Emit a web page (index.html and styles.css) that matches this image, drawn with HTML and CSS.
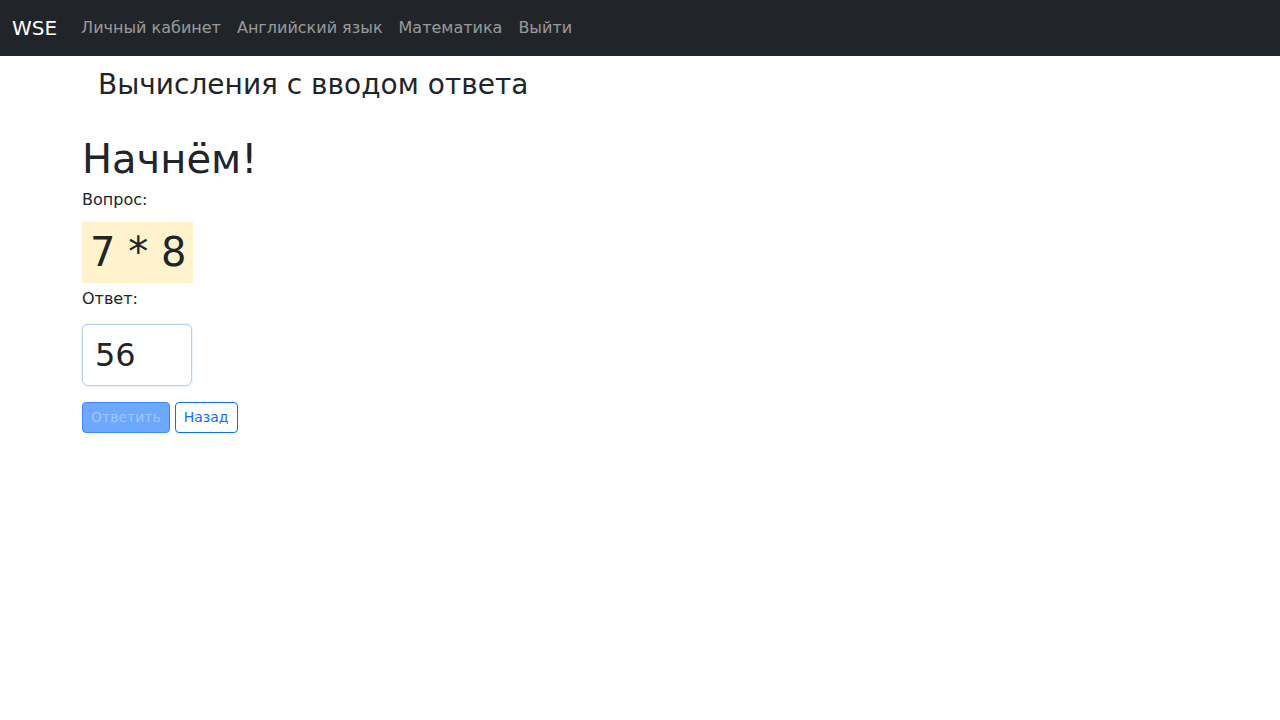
FILE: index.html
```html
<!DOCTYPE html>
<html lang="ru">
<head>
<meta charset="utf-8">
<title>WSE</title>
<link rel="stylesheet" href="styles.css">
</head>
<body>
<nav class="navbar">
  <a class="brand" href="#">WSE</a>
  <ul class="nav">
    <li><a href="#">Личный кабинет</a></li>
    <li><a href="#">Английский язык</a></li>
    <li><a href="#">Математика</a></li>
    <li><a href="#">Выйти</a></li>
  </ul>
</nav>
<main class="container">
  <h3 class="page-title">Вычисления с вводом ответа</h3>
  <h1 class="start">Начнём!</h1>
  <div class="label label-q">Вопрос:</div>
  <div class="question">7 * 8</div>
  <div class="label">Ответ:</div>
  <input class="answer" type="text" value="56">
  <div class="buttons">
    <button class="btn btn-primary" disabled>Ответить</button>
    <button class="btn btn-outline">Назад</button>
  </div>
</main>
</body>
</html>
```
FILE: styles.css
```css
* { box-sizing: border-box; }
body {
  margin: 0;
  font-family: "DejaVu Sans", sans-serif;
  font-size: 16px;
  line-height: 1.5;
  color: #212529;
  background: #fff;
}
.navbar {
  height: 56px;
  background: #212529;
  display: flex;
  align-items: center;
  padding: 0 12px;
}
.brand {
  color: #fff;
  font-size: 20px;
  text-decoration: none;
  margin-right: 16px;
  line-height: 30px;
}
.nav {
  display: flex;
  list-style: none;
  margin: 0;
  padding: 0;
}
.nav a {
  display: block;
  padding: 8px;
  color: rgba(255,255,255,.55);
  text-decoration: none;
}
.container {
  max-width: 1140px;
  margin: 0 auto;
  padding: 0 12px;
}
.page-title {
  font-size: 28px;
  font-weight: 400;
  line-height: 1.2;
  margin: 12px 0 0;
  padding-left: 16px;
}
.start {
  font-size: 40px;
  font-weight: 400;
  line-height: 1.2;
  margin: 33px 0 0;
}
.label {
  margin: 2px 0 0;
}
.label-q {
  margin-top: 5px;
}
.question {
  display: inline-block;
  background: #fff3cd;
  font-size: 40px;
  line-height: 1.2;
  padding: 6px 7px 7px 8px;
  margin: 10px 0 2px;
}
.answer {
  display: block;
  width: 110px;
  height: 62px;
  margin-top: 13px;
  padding: 8px 12px;
  font-family: "DejaVu Sans", sans-serif;
  font-size: 32px;
  color: #212529;
  border: 1px solid #b6cff7;
  border-radius: 6px;
  box-shadow: 0 0 0 1px rgba(13,110,253,.08);
  outline: none;
}
.buttons {
  margin-top: 16px;
  display: flex;
  gap: 5px;
}
.btn {
  font-family: "DejaVu Sans", sans-serif;
  font-size: 14px;
  line-height: 21px;
  padding: 4px 8px;
  border-radius: 4px;
  border: 1px solid #0d6efd;
  height: 31px;
}
.btn-primary {
  background: #6ea8fe;
  border-color: #3d8bfd;
  color: #9ec5fe;
}
.btn-outline {
  background: #fff;
  color: #0d6efd;
}
```
